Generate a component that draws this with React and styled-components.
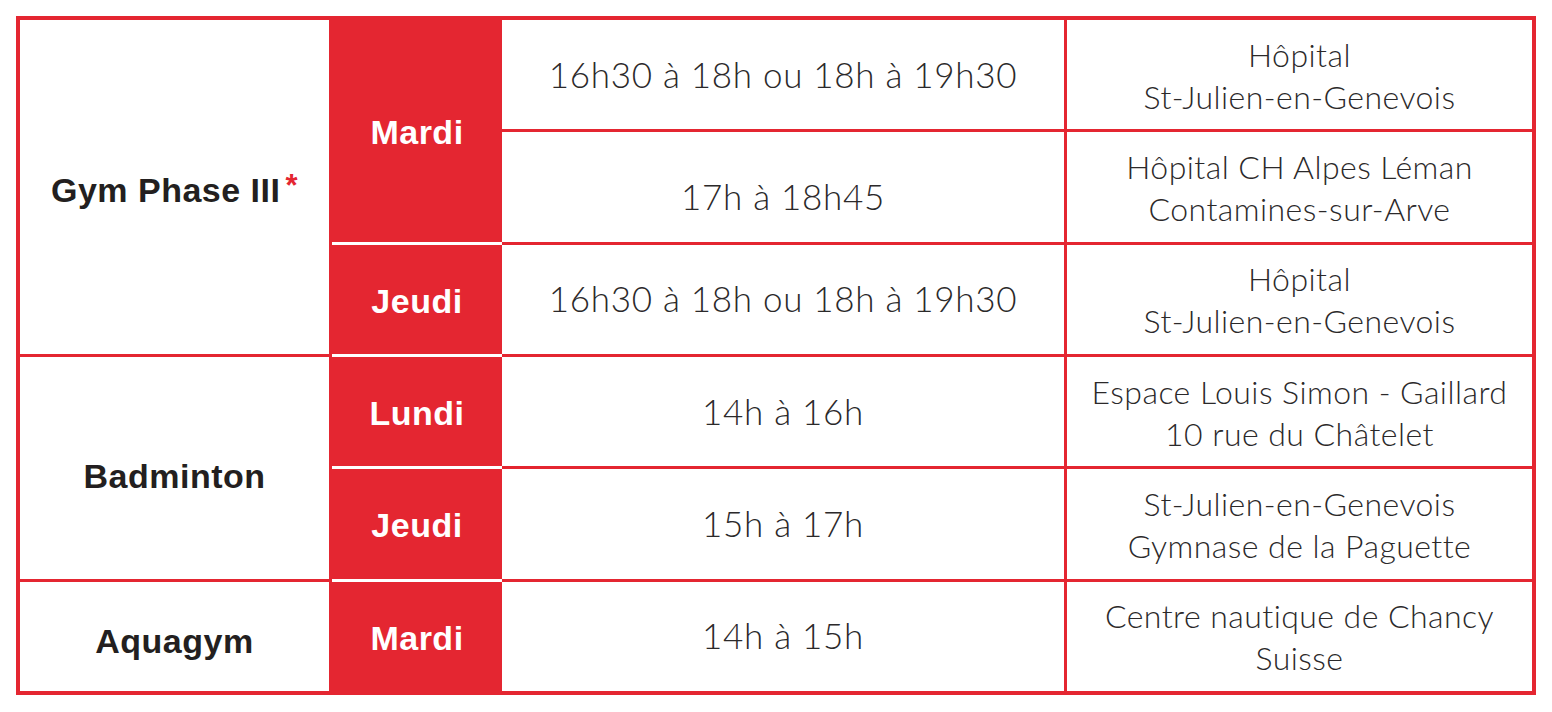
import React from 'react'
import styled, { createGlobalStyle } from 'styled-components'

const RED = '#e42631'

const GlobalStyle = createGlobalStyle`
  html, body {
    margin: 0;
    padding: 0;
    background: #ffffff;
  }
  body {
    font-family: "Liberation Sans", Arial, sans-serif;
  }
`

// shift = how far the text sits below the cell's centre in the print layout
const schedule = [
  { activity: 'Gym Phase III', star: true, rows: [1, 4], shift: 3 },
  { activity: 'Badminton', rows: [4, 6], shift: 9 },
  { activity: 'Aquagym', rows: [6, 7], shift: 5 },
]

const days = [
  { day: 'Mardi', rows: [1, 3], first: true },
  { day: 'Jeudi', rows: [3, 4] },
  { day: 'Lundi', rows: [4, 5] },
  { day: 'Jeudi', rows: [5, 6] },
  { day: 'Mardi', rows: [6, 7] },
]

const slots = [
  { time: '16h30 à 18h ou 18h à 19h30', place: ['Hôpital', 'St-Julien-en-Genevois'] },
  { time: '17h à 18h45', place: ['Hôpital CH Alpes Léman', 'Contamines-sur-Arve'], shift: 10 },
  { time: '16h30 à 18h ou 18h à 19h30', place: ['Hôpital', 'St-Julien-en-Genevois'] },
  { time: '14h à 16h', place: ['Espace Louis Simon - Gaillard', '10 rue du Châtelet'] },
  { time: '15h à 17h', place: ['St-Julien-en-Genevois', 'Gymnase de la Paguette'] },
  { time: '14h à 15h', place: ['Centre nautique de Chancy', 'Suisse'] },
]

function App() {
  return (
    <Page>
      <GlobalStyle />
      <Table>
        {schedule.map((s) => (
          <Activity key={s.activity} $from={s.rows[0]} $to={s.rows[1]} $shift={s.shift}>
            {s.activity}
            {s.star && <Star>*</Star>}
          </Activity>
        ))}
        {days.map((d, i) => (
          <Day key={i} $from={d.rows[0]} $to={d.rows[1]} $first={d.first}>
            {d.day}
          </Day>
        ))}
        {slots.map((slot, i) => (
          <React.Fragment key={i}>
            <Time $row={i + 1} $shift={slot.shift || 0}>{slot.time}</Time>
            <Place $row={i + 1}>
              {slot.place.map((line) => (
                <span key={line}>{line}</span>
              ))}
            </Place>
          </React.Fragment>
        ))}
      </Table>
    </Page>
  )
}

const Page = styled.div`
  padding: 16px;
`

const Table = styled.div`
  width: 1520px;
  height: 679px;
  box-sizing: border-box;
  border: 4px solid ${RED};
  background: ${RED};
  display: grid;
  grid-template-columns: 309px 167px 562px 465px;
  grid-template-rows: repeat(6, 1fr);
  gap: 3px;
`

const Cell = styled.div`
  background: #ffffff;
  display: flex;
  flex-direction: column;
  align-items: center;
  justify-content: center;
  text-align: center;
`

const Activity = styled(Cell)`
  grid-column: 1;
  grid-row: ${(p) => p.$from} / ${(p) => p.$to};
  flex-direction: row;
  padding-top: ${(p) => p.$shift * 2}px;
  font-weight: 700;
  font-size: 34px;
  color: #231f20;
  letter-spacing: 0.5px;
`

const Star = styled.span`
  color: ${RED};
  font-size: 31px;
  margin-left: 5px;
  margin-top: -9px;
`

const Day = styled(Cell)`
  grid-column: 2;
  grid-row: ${(p) => p.$from} / ${(p) => p.$to};
  background: ${RED};
  color: #ffffff;
  font-weight: 700;
  font-size: 34px;
  letter-spacing: 0.5px;
  padding-top: 4px;
  margin-right: -3px;
  box-shadow: ${(p) => (p.$first ? 'none' : '0 -3px 0 #ffffff')};
`

const Light = styled(Cell)`
  font-family: Lato, "Liberation Sans", sans-serif;
  font-weight: 300;
  color: #2b292a;
`

const Time = styled(Light)`
  grid-column: 3;
  grid-row: ${(p) => p.$row};
  font-size: 35px;
  letter-spacing: 0.7px;
  padding-top: ${(p) => p.$shift * 2}px;
  padding-bottom: 2px;
`

const Place = styled(Light)`
  grid-column: 4;
  grid-row: ${(p) => p.$row};
  font-size: 32px;
  line-height: 42px;
  letter-spacing: 0.45px;
  padding-top: 2px;
`

export default App
